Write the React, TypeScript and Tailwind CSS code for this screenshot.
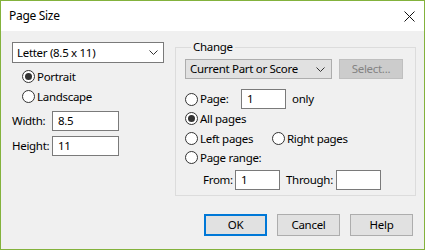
import React from "react";

function Radio({ checked = false, label }: { checked?: boolean; label: string }) {
  return (
    <div className="flex items-center h-[13px]">
      <span className="w-[13px] h-[13px] rounded-full border border-[#333333] bg-white flex items-center justify-center shrink-0">
        {checked && <span className="w-[7px] h-[7px] rounded-full bg-[#333333]" />}
      </span>
      <span className="ml-[2px] leading-none">{label}</span>
    </div>
  );
}

function Chevron() {
  return (
    <svg width="9" height="5" viewBox="0 0 9 5" className="shrink-0">
      <polyline points="0.5,0.5 4.5,4.5 8.5,0.5" fill="none" stroke="#333" strokeWidth="1" />
    </svg>
  );
}

function TextBox({ value, className }: { value: string; className: string }) {
  return (
    <div className={`h-[20px] border border-[#7a7a7a] bg-white flex items-center pl-[5px] ${className}`}>
      {value}
    </div>
  );
}

function Button({ label, primary = false }: { label: string; primary?: boolean }) {
  return (
    <button
      className={`w-[63px] h-[22px] bg-[#e1e1e1] flex items-center justify-center ${
        primary ? "border-2 border-[#0078d7]" : "border border-[#adadad]"
      }`}
    >
      {label}
    </button>
  );
}

export default function App() {
  return (
    <div
      className="w-[425px] h-[250px] border border-[#83b23c] bg-[#f0f0f0] flex flex-col text-[11.5px] tracking-[-0.3px] text-black"
      style={{ fontFamily: '"Noto Sans", "Open Sans", sans-serif' }}
    >
      {/* Title bar */}
      <div className="h-[30px] bg-white flex items-center justify-between pl-2 pr-[9px] shrink-0">
        <span className="text-[12px]">Page Size</span>
        <svg width="11" height="11" viewBox="0 0 11 11">
          <path d="M0.5 0.5 L10.5 10.5 M10.5 0.5 L0.5 10.5" stroke="#111" strokeWidth="1" />
        </svg>
      </div>

      <div className="flex pl-[11px] pt-[11px]">
        {/* Left column */}
        <div className="w-[152px] flex flex-col">
          <div className="h-[21px] border border-[#7a7a7a] bg-white flex items-center justify-between pl-[4px] pr-[5px]">
            <span>Letter (8.5 x 11)</span>
            <Chevron />
          </div>
          <div className="ml-[10px] mt-[7px] flex flex-col gap-[7px]">
            <Radio checked label="Portrait" />
            <Radio label="Landscape" />
          </div>
          <div className="mt-[8px] flex items-center">
            <span className="w-[40px]">Width:</span>
            <TextBox value="8.5" className="w-[67px]" />
          </div>
          <div className="mt-[5px] flex items-center">
            <span className="w-[40px]">Height:</span>
            <TextBox value="11" className="w-[67px]" />
          </div>
        </div>

        {/* Change group */}
        <fieldset className="ml-[11px] -mt-[3px] w-[241px] border border-[#dcdcdc] px-[9px] pb-[5px]">
          <legend className="ml-[6px] px-[2px] leading-[16px]">Change</legend>
          <div className="flex flex-col">
            <div className="mt-[4px] flex items-center gap-[7px]">
              <div className="w-[147px] h-[20px] border border-[#adadad] bg-[#e1e1e1] flex items-center justify-between pl-[4px] pr-[6px]">
                <span>Current Part or Score</span>
                <Chevron />
              </div>
              <div className="w-[64px] h-[20px] border border-[#bfbfbf] bg-[#cccccc] text-[#838383] flex items-center justify-center">
                Select...
              </div>
            </div>
            <div className="mt-[10px] flex items-center">
              <div className="w-[56px]">
                <Radio label="Page:" />
              </div>
              <TextBox value="1" className="w-[45px]" />
              <span className="ml-[6px]">only</span>
            </div>
            <div className="mt-[3px]">
              <Radio checked label="All pages" />
            </div>
            <div className="mt-[7px] flex items-center">
              <div className="w-[87px]">
                <Radio label="Left pages" />
              </div>
              <Radio label="Right pages" />
            </div>
            <div className="mt-[6px]">
              <Radio label="Page range:" />
            </div>
            <div className="mt-[6px] ml-[18px] flex items-center">
              <span className="w-[32px]">From:</span>
              <TextBox value="1" className="w-[45px]" />
              <span className="ml-[6px] w-[50px]">Through:</span>
              <TextBox value="" className="w-[45px]" />
            </div>
          </div>
        </fieldset>
      </div>

      {/* Buttons */}
      <div className="mt-[18px] flex justify-end gap-[10px] pr-[11px]">
        <Button label="OK" primary />
        <Button label="Cancel" />
        <Button label="Help" />
      </div>
    </div>
  );
}
